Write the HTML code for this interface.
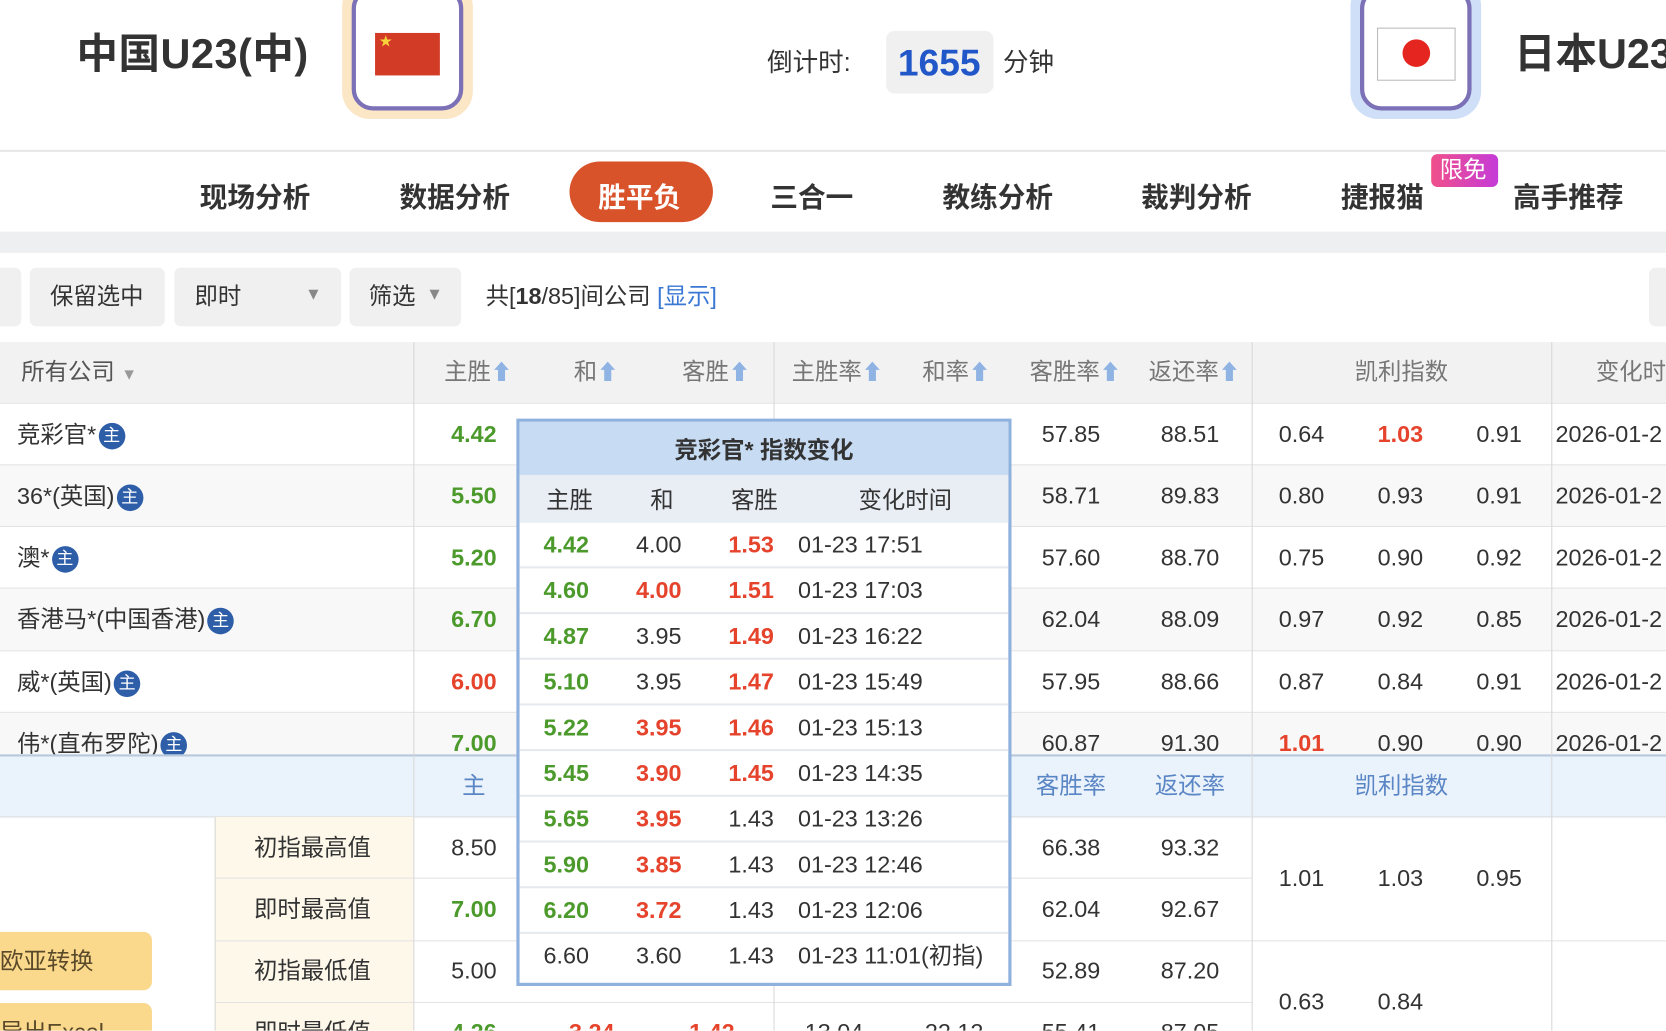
<!DOCTYPE html>
<html><head><meta charset="utf-8"><style>
html,body{margin:0;padding:0;width:1666px;height:1030px;overflow:hidden;background:#fff}
#w{position:absolute;left:0;top:0;width:1568px;height:970px;transform:scale(1.0625);transform-origin:0 0;font-family:"Liberation Sans","Noto Sans CJK SC",sans-serif;color:#333;overflow:hidden}
.a{position:absolute}
.t{position:absolute;white-space:nowrap;font-size:22px;line-height:1}
.c{transform:translateX(-50%)}
.b{font-weight:bold}
.g{color:#4b9a2b;font-weight:bold}
.r{color:#e5432b;font-weight:bold}
.bl{color:#5b86c5}
.tab{position:absolute;top:166px;font-size:26px;font-weight:bold;color:#333;white-space:nowrap}
.btn{position:absolute;top:252px;height:55px;background:#f0f0f0;border-radius:6px}
.hl{position:absolute;left:0;width:1568px;height:1px;background:#e4e4e4}
.vl{position:absolute;width:1px;background:#d8d8d8}
.zhu{display:inline-block;width:25px;height:25px;border-radius:50%;background:#2e5ea8;color:#fff;font-size:16px;text-align:center;line-height:25px;vertical-align:middle;margin-left:2px}
.ar{color:#8fb3e3;font-size:20px}
.pr{position:relative;height:41px;border-bottom:2px solid #e6e9ee}
</style></head><body><div id="w">
<div class="t b" style="left:72px;top:32px;font-size:39px;letter-spacing:0.5px">中国U23(中)</div>
<div class="a" style="left:322px;top:-20px;width:123px;height:132px;border-radius:26px;background:#fbe6c6"></div>
<div class="a" style="left:331px;top:-12px;width:97px;height:108px;border-radius:20px;border:4px solid #7c70b6;background:#fff"></div>
<div class="a" style="left:353px;top:31px;width:61px;height:40px;background:#d23c26"></div>
<div class="t" style="left:357px;top:33px;font-size:12px;color:#f8d33a">★</div>
<div class="t" style="left:722px;top:48px;font-size:24px">倒计时:</div>
<div class="a" style="left:834px;top:29px;width:101px;height:59px;background:#f0f0f0;border-radius:8px"></div>
<div class="t b c" style="left:884px;top:42px;font-size:35px;color:#2157c8">1655</div>
<div class="t" style="left:944px;top:48px;font-size:24px">分钟</div>
<div class="a" style="left:1271px;top:-20px;width:123px;height:132px;border-radius:26px;background:#cfdff8"></div>
<div class="a" style="left:1280px;top:-12px;width:97px;height:108px;border-radius:20px;border:4px solid #7c70b6;background:#fff"></div>
<div class="a" style="left:1296px;top:26px;width:72px;height:48px;border:1px solid #bbb;background:#fff"></div>
<div class="a" style="left:1320px;top:37px;width:26px;height:26px;border-radius:50%;background:#e5251f"></div>
<div class="t b" style="left:1425px;top:32px;font-size:39px">日本U23</div>
<div class="a" style="left:0;top:141px;width:1568px;height:2px;background:#e8e8e8"></div>
<div class="tab" style="left:188px">现场分析</div>
<div class="tab" style="left:376px">数据分析</div>
<div class="a" style="left:536px;top:152px;width:135px;height:57px;border-radius:29px;background:#d8522a"></div>
<div class="tab" style="left:563px;color:#fff">胜平负</div>
<div class="tab" style="left:725px">三合一</div>
<div class="tab" style="left:887px">教练分析</div>
<div class="tab" style="left:1074px">裁判分析</div>
<div class="tab" style="left:1262px">捷报猫</div>
<div class="a" style="left:1347px;top:145px;width:63px;height:31px;border-radius:6px;background:linear-gradient(90deg,#f0508a,#c53ad8)"></div>
<div class="t" style="left:1355px;top:149px;font-size:22px;color:#fff">限免</div>
<div class="tab" style="left:1424px">高手推荐</div>
<div class="a" style="left:0;top:218px;width:1568px;height:20px;background:#eeeff1"></div>
<div class="btn" style="left:-10px;width:30px"></div>
<div class="btn" style="left:28px;width:127px"></div><div class="t" style="left:47px;top:268px">保留选中</div>
<div class="btn" style="left:164px;width:157px"></div><div class="t" style="left:183px;top:268px">即时</div><div class="t" style="left:287px;top:270px;font-size:16px;color:#888">▼</div>
<div class="btn" style="left:329px;width:105px"></div><div class="t" style="left:347px;top:268px">筛选</div><div class="t" style="left:401px;top:270px;font-size:16px;color:#888">▼</div>
<div class="t" style="left:457px;top:268px">共[<b>18</b>/85]间公司 <span style="color:#3a78d4">[显示]</span></div>
<div class="btn" style="left:1552px;width:30px"></div>
<div class="a" style="left:0;top:322px;width:1568px;height:57px;background:#f2f2f3"></div>
<div class="t" style="left:20px;top:339px;color:#555">所有公司 <span style="font-size:15px;color:#999">▼</span></div>
<div class="t" style="left:418px;top:339px;color:#777">主胜<span class="ar">⬆</span></div>
<div class="t" style="left:540px;top:339px;color:#777">和<span class="ar">⬆</span></div>
<div class="t" style="left:642px;top:339px;color:#777">客胜<span class="ar">⬆</span></div>
<div class="t" style="left:745px;top:339px;color:#777">主胜率<span class="ar">⬆</span></div>
<div class="t" style="left:868px;top:339px;color:#777">和率<span class="ar">⬆</span></div>
<div class="t" style="left:969px;top:339px;color:#777">客胜率<span class="ar">⬆</span></div>
<div class="t" style="left:1081px;top:339px;color:#777">返还率<span class="ar">⬆</span></div>
<div class="t c" style="left:1319px;top:339px;color:#777">凯利指数</div>
<div class="t" style="left:1502px;top:339px;color:#777">变化时</div>
<div class="a" style="left:0;top:437px;width:1568px;height:58px;background:#f8f8f8"></div>
<div class="a" style="left:0;top:553px;width:1568px;height:59px;background:#f8f8f8"></div>
<div class="a" style="left:0;top:670px;width:1568px;height:40px;background:#f8f8f8"></div>
<div class="hl" style="top:379px"></div><div class="hl" style="top:437px"></div><div class="hl" style="top:495px"></div><div class="hl" style="top:553px"></div><div class="hl" style="top:612px"></div><div class="hl" style="top:670px"></div>
<div class="t" style="left:16px;top:398px">竞彩官*<span class="zhu">主</span></div>
<div class="t" style="left:16px;top:456px">36*(英国)<span class="zhu">主</span></div>
<div class="t" style="left:16px;top:514px">澳*<span class="zhu">主</span></div>
<div class="t" style="left:16px;top:572px">香港马*(中国香港)<span class="zhu">主</span></div>
<div class="t" style="left:16px;top:631px">威*(英国)<span class="zhu">主</span></div>
<div class="t" style="left:16px;top:689px">伟*(直布罗陀)<span class="zhu">主</span></div>
<div class="t g c" style="left:446px;top:398px">4.42</div>
<div class="t g c" style="left:446px;top:456px">5.50</div>
<div class="t g c" style="left:446px;top:514px">5.20</div>
<div class="t g c" style="left:446px;top:572px">6.70</div>
<div class="t r c" style="left:446px;top:631px">6.00</div>
<div class="t g c" style="left:446px;top:689px">7.00</div>
<div class="t c" style="left:1008px;top:398px">57.85</div><div class="t c" style="left:1120px;top:398px">88.51</div><div class="t c" style="left:1225px;top:398px">0.64</div><div class="t r c" style="left:1318px;top:398px">1.03</div><div class="t c" style="left:1411px;top:398px">0.91</div><div class="t" style="left:1464px;top:398px">2026-01-2</div>
<div class="t c" style="left:1008px;top:456px">58.71</div><div class="t c" style="left:1120px;top:456px">89.83</div><div class="t c" style="left:1225px;top:456px">0.80</div><div class="t c" style="left:1318px;top:456px">0.93</div><div class="t c" style="left:1411px;top:456px">0.91</div><div class="t" style="left:1464px;top:456px">2026-01-2</div>
<div class="t c" style="left:1008px;top:514px">57.60</div><div class="t c" style="left:1120px;top:514px">88.70</div><div class="t c" style="left:1225px;top:514px">0.75</div><div class="t c" style="left:1318px;top:514px">0.90</div><div class="t c" style="left:1411px;top:514px">0.92</div><div class="t" style="left:1464px;top:514px">2026-01-2</div>
<div class="t c" style="left:1008px;top:572px">62.04</div><div class="t c" style="left:1120px;top:572px">88.09</div><div class="t c" style="left:1225px;top:572px">0.97</div><div class="t c" style="left:1318px;top:572px">0.92</div><div class="t c" style="left:1411px;top:572px">0.85</div><div class="t" style="left:1464px;top:572px">2026-01-2</div>
<div class="t c" style="left:1008px;top:631px">57.95</div><div class="t c" style="left:1120px;top:631px">88.66</div><div class="t c" style="left:1225px;top:631px">0.87</div><div class="t c" style="left:1318px;top:631px">0.84</div><div class="t c" style="left:1411px;top:631px">0.91</div><div class="t" style="left:1464px;top:631px">2026-01-2</div>
<div class="t c" style="left:1008px;top:689px">60.87</div><div class="t c" style="left:1120px;top:689px">91.30</div><div class="t r c" style="left:1225px;top:689px">1.01</div><div class="t c" style="left:1318px;top:689px">0.90</div><div class="t c" style="left:1411px;top:689px">0.90</div><div class="t" style="left:1464px;top:689px">2026-01-2</div>
<div class="a" style="left:0;top:710px;width:1568px;height:58px;background:#eaf2fb;border-top:2px solid #b9c9dc"></div>
<div class="t bl c" style="left:446px;top:729px">主</div>
<div class="t bl c" style="left:1008px;top:729px">客胜率</div>
<div class="t bl c" style="left:1120px;top:729px">返还率</div>
<div class="t bl c" style="left:1319px;top:729px">凯利指数</div>
<div class="hl" style="top:768px"></div>
<div class="a" style="left:202px;top:769px;width:187px;height:210px;background:#fdf8ea"></div>
<div class="hl" style="top:826px;left:202px;width:976px"></div><div class="hl" style="top:885px;left:202px"></div><div class="hl" style="top:943px;left:202px;width:976px"></div>
<div class="vl" style="left:202px;top:769px;height:210px"></div>
<div class="t" style="left:239px;top:787px">初指最高值</div><div class="t c" style="left:446px;top:787px">8.50</div><div class="t c" style="left:1008px;top:787px">66.38</div><div class="t c" style="left:1120px;top:787px">93.32</div>
<div class="t" style="left:239px;top:845px">即时最高值</div><div class="t g c" style="left:446px;top:845px">7.00</div><div class="t c" style="left:1008px;top:845px">62.04</div><div class="t c" style="left:1120px;top:845px">92.67</div>
<div class="t" style="left:239px;top:903px">初指最低值</div><div class="t c" style="left:446px;top:903px">5.00</div><div class="t c" style="left:1008px;top:903px">52.89</div><div class="t c" style="left:1120px;top:903px">87.20</div>
<div class="t" style="left:239px;top:961px">即时最低值</div><div class="t g c" style="left:446px;top:961px">4.26</div><div class="t r c" style="left:557px;top:961px">3.24</div><div class="t r c" style="left:670px;top:961px">1.42</div><div class="t c" style="left:785px;top:961px">13.04</div><div class="t c" style="left:898px;top:961px">22.12</div><div class="t c" style="left:1008px;top:961px">55.41</div><div class="t c" style="left:1120px;top:961px">87.05</div>
<div class="t c" style="left:1225px;top:816px">1.01</div><div class="t c" style="left:1318px;top:816px">1.03</div><div class="t c" style="left:1411px;top:816px">0.95</div>
<div class="t c" style="left:1225px;top:932px">0.63</div><div class="t c" style="left:1318px;top:932px">0.84</div>
<div class="a" style="left:-10px;top:877px;width:153px;height:55px;border-radius:8px;background:#fad88c"></div><div class="t" style="left:0;top:894px;color:#5a4a2a">欧亚转换</div>
<div class="a" style="left:-10px;top:944px;width:153px;height:55px;border-radius:8px;background:#fad88c"></div><div class="t" style="left:0;top:961px;color:#5a4a2a">导出Excel</div>
<div class="vl" style="left:389px;top:322px;height:660px"></div>
<div class="vl" style="left:728px;top:322px;height:660px"></div>
<div class="vl" style="left:1178px;top:322px;height:660px"></div>
<div class="vl" style="left:1460px;top:322px;height:660px"></div>
<div class="a" style="left:486px;top:394px;width:460px;height:528px;border:3px solid #8fb1dd;background:#fff">
<div class="a" style="left:0;top:0;width:460px;height:50px;background:#c7dcf2"></div>
<div class="t b c" style="left:230px;top:16px">竞彩官* 指数变化</div>
<div class="a" style="left:0;top:50px;width:460px;height:45px;background:#e9eef5"></div>
<div class="t c" style="left:47px;top:63px">主胜</div><div class="t c" style="left:134px;top:63px">和</div><div class="t c" style="left:221px;top:63px">客胜</div><div class="t c" style="left:363px;top:63px">变化时间</div>
</div>
<div style="position:absolute;left:489px;top:492px;width:460px">
<div class="pr"><span class="t g c" style="left:44px;top:10px">4.42</span><span class="t c" style="left:131px;top:10px">4.00</span><span class="t r c" style="left:218px;top:10px">1.53</span><span class="t" style="left:262px;top:10px">01-23 17:51</span></div>
<div class="pr"><span class="t g c" style="left:44px;top:10px">4.60</span><span class="t r c" style="left:131px;top:10px">4.00</span><span class="t r c" style="left:218px;top:10px">1.51</span><span class="t" style="left:262px;top:10px">01-23 17:03</span></div>
<div class="pr"><span class="t g c" style="left:44px;top:10px">4.87</span><span class="t c" style="left:131px;top:10px">3.95</span><span class="t r c" style="left:218px;top:10px">1.49</span><span class="t" style="left:262px;top:10px">01-23 16:22</span></div>
<div class="pr"><span class="t g c" style="left:44px;top:10px">5.10</span><span class="t c" style="left:131px;top:10px">3.95</span><span class="t r c" style="left:218px;top:10px">1.47</span><span class="t" style="left:262px;top:10px">01-23 15:49</span></div>
<div class="pr"><span class="t g c" style="left:44px;top:10px">5.22</span><span class="t r c" style="left:131px;top:10px">3.95</span><span class="t r c" style="left:218px;top:10px">1.46</span><span class="t" style="left:262px;top:10px">01-23 15:13</span></div>
<div class="pr"><span class="t g c" style="left:44px;top:10px">5.45</span><span class="t r c" style="left:131px;top:10px">3.90</span><span class="t r c" style="left:218px;top:10px">1.45</span><span class="t" style="left:262px;top:10px">01-23 14:35</span></div>
<div class="pr"><span class="t g c" style="left:44px;top:10px">5.65</span><span class="t r c" style="left:131px;top:10px">3.95</span><span class="t c" style="left:218px;top:10px">1.43</span><span class="t" style="left:262px;top:10px">01-23 13:26</span></div>
<div class="pr"><span class="t g c" style="left:44px;top:10px">5.90</span><span class="t r c" style="left:131px;top:10px">3.85</span><span class="t c" style="left:218px;top:10px">1.43</span><span class="t" style="left:262px;top:10px">01-23 12:46</span></div>
<div class="pr"><span class="t g c" style="left:44px;top:10px">6.20</span><span class="t r c" style="left:131px;top:10px">3.72</span><span class="t c" style="left:218px;top:10px">1.43</span><span class="t" style="left:262px;top:10px">01-23 12:06</span></div>
<div style="position:relative;height:43px"><span class="t c" style="left:44px;top:10px">6.60</span><span class="t c" style="left:131px;top:10px">3.60</span><span class="t c" style="left:218px;top:10px">1.43</span><span class="t" style="left:262px;top:10px">01-23 11:01(初指)</span></div>
</div>
</div></body></html>
